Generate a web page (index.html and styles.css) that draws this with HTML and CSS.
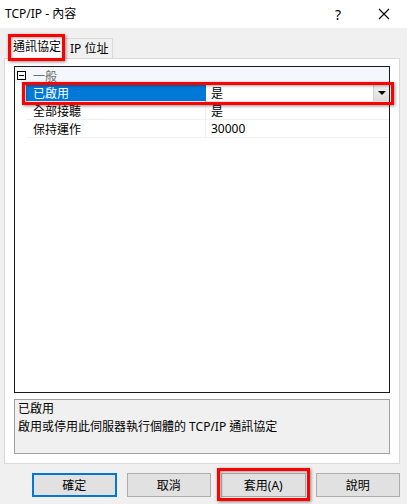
FILE: index.html
```html
<!DOCTYPE html>
<html lang="zh-Hant">
<head>
<meta charset="utf-8">
<title>TCP/IP - 內容</title>
<link rel="stylesheet" href="styles.css">
</head>
<body>
<div class="window">
  <div class="titlebar">
    <span class="title">TCP/IP - 內容</span>
    <div class="tb-btn help">?</div>
    <div class="tb-btn close">
      <svg width="12" height="12" viewBox="0 0 12 12"><path d="M1 1 L11 11 M11 1 L1 11" stroke="#000" stroke-width="1.1" fill="none"/></svg>
    </div>
  </div>
  <div class="content">
    <div class="tabs">
      <div class="tab active mark">通訊協定</div>
      <div class="tab">IP 位址</div>
    </div>
    <div class="panel">
      <div class="grid">
        <div class="row cat">
          <svg class="toggle" width="9" height="9" viewBox="0 0 9 9"><rect x="0.5" y="0.5" width="8" height="8" fill="#fff" stroke="#000"/><path d="M2 4.5 H7" stroke="#000"/></svg>
          <span class="cat-label">一般</span>
        </div>
        <div class="row sel mark">
          <div class="name">已啟用</div>
          <div class="val">是<span class="dd"><svg width="8" height="4" viewBox="0 0 8 4"><path d="M0 0 H8 L4 4 Z" fill="#000"/></svg></span></div>
        </div>
        <div class="row">
          <div class="name">全部接聽</div>
          <div class="val">是</div>
        </div>
        <div class="row">
          <div class="name">保持運作</div>
          <div class="val">30000</div>
        </div>
      </div>
      <div class="desc">
        <div>已啟用</div>
        <div>啟用或停用此伺服器執行個體的 TCP/IP 通訊協定</div>
      </div>
    </div>
    <div class="buttons">
      <div class="btn default">確定</div>
      <div class="btn">取消</div>
      <div class="btn mark apply">套用(A)</div>
      <div class="btn">說明</div>
    </div>
  </div>
</div>
</body>
</html>
```
FILE: styles.css
```css
* { box-sizing: border-box; }
html, body { margin: 0; padding: 0; }
body {
  width: 407px;
  height: 504px;
  background: #f0f0f0;
  font-family: "Segoe UI", "Noto Sans", "Noto Sans CJK TC", sans-serif;
  font-size: 12px;
  color: #000;
  overflow: hidden;
}
.window { width: 407px; height: 504px; display: flex; flex-direction: column; }
.titlebar {
  height: 28px;
  background: #fff;
  display: flex;
  align-items: center;
  padding-left: 5px;
}
.title { flex: 1; font-size: 12px; line-height: 16px; }
.tb-btn {
  width: 46px;
  height: 28px;
  display: flex;
  align-items: center;
  justify-content: center;
}
.help { font-size: 14px; }
.content { flex: 1; display: flex; flex-direction: column; padding: 0 7px 0 4px; }
.tabs {
  height: 30px;
  display: flex;
  align-items: flex-end;
  padding-left: 5px;
  position: relative;
  z-index: 2;
}
.tab {
  height: 20px;
  border: 1px solid #d9d9d9;
  border-bottom: none;
  background: #f0f0f0;
  padding: 0 4px 0 5px;
  display: flex;
  align-items: center;
  line-height: 16px;
  margin-left: -1px;
  margin-bottom: 0;
}
.tab.active {
  height: 24px;
  width: 56px;
  background: #fff;
  padding: 0 0 2px 3px;
  margin-left: 0;
  margin-bottom: -1px;
  position: relative;
  z-index: 3;
}
.panel {
  height: 406px;
  border: 1px solid #d9d9d9;
  background: #fff;
  padding: 7px 9px 9px 9px;
  display: flex;
  flex-direction: column;
  gap: 6px;
}
.grid {
  height: 327px;
  border: 1px solid #1a1a1a;
  background: #fff;
  position: relative;
}
.row {
  height: 18px;
  display: flex;
  align-items: stretch;
  padding-left: 11px;
  position: relative;
}
.row .name {
  width: 180px;
  padding-left: 7px;
  display: flex;
  align-items: center;
  border-right: 1px solid #f0f0f0;
  border-bottom: 1px solid #f0f0f0;
}
.row .val {
  flex: 1;
  padding-left: 5px;
  display: flex;
  align-items: center;
  border-bottom: 1px solid #f0f0f0;
  position: relative;
}
.row.cat {
  height: 17px;
  background: #f4f7fc;
  padding-left: 2px;
  align-items: center;
}
.toggle { margin-top: -1px; }
.cat-label { margin-left: 7px; color: #6d6d6d; }
.row.sel .name { background: #0078d7; color: #fff; border-right-color: #0078d7; }
.dd {
  position: absolute;
  right: 0;
  top: 0;
  width: 16px;
  height: 17px;
  background: linear-gradient(#f2f2f2, #dcdcdc);
  border-left: 1px solid #cfcfcf;
  display: flex;
  align-items: center;
  justify-content: center;
}
.desc {
  height: 55px;
  border: 1px solid #a0a0a0;
  background: #f0f0f0;
  padding: 0 3px;
  line-height: 18px;
}
.buttons {
  display: flex;
  gap: 10px;
  padding: 9px 0 0 28px;
}
.btn {
  width: 85px;
  height: 24px;
  background: #e1e1e1;
  border: 1px solid #adadad;
  display: flex;
  align-items: center;
  justify-content: center;
  position: relative;
}
.btn.default { border: 2px solid #0078d7; }
.mark { position: relative; }
.mark::after {
  content: "";
  position: absolute;
  border: 3px solid #ff0000;
  box-shadow: 1px 1px 3px rgba(0,0,0,0.45), inset 1px 1px 3px rgba(0,0,0,0.35);
  pointer-events: none;
  z-index: 10;
}
.tab.mark::after { left: -2px; right: -1px; top: -2px; bottom: -2px; }
.row.sel::after { left: 7px; right: -5px; top: -2px; bottom: -3px; }
.btn.apply::after { left: -5px; right: -5px; top: -6px; bottom: -5px; }
```
